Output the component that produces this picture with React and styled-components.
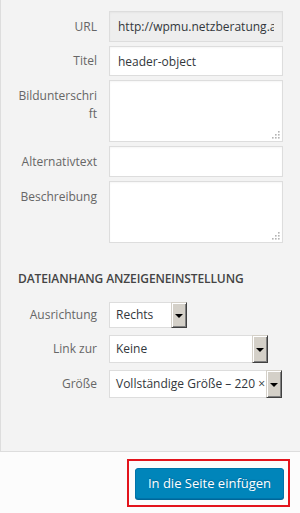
import React from 'react'
import styled, { createGlobalStyle } from 'styled-components'

const GlobalStyle = createGlobalStyle`
  html, body {
    margin: 0;
    padding: 0;
    background: #fcfcfc;
    font-family: "Open Sans", "Liberation Sans", sans-serif;
    font-size: 12px;
  }
  * { box-sizing: border-box; }
`

const Page = styled.div`
  width: 300px;
  height: 513px;
  display: flex;
  flex-direction: column;
  background: #fcfcfc;
  overflow: hidden;
`

const Panel = styled.div`
  height: 452px;
  flex: none;
  background: #f3f3f3;
  border-left: 1px solid #dddddd;
  border-bottom: 1px solid #dddddd;
  padding: 11px 0 0 16px;
`

const FieldGrid = styled.div`
  display: grid;
  grid-template-columns: 80px 174px;
  column-gap: 12px;
  row-gap: 4px;
`

const Label = styled.label`
  color: #666666;
  text-align: right;
  line-height: 18px;
  padding-top: ${p => (p.$top ? '7px' : '0')};
  align-self: ${p => (p.$top ? 'start' : 'center')};
  white-space: nowrap;
`

const TextInput = styled.input`
  width: 100%;
  height: ${p => (p.$tall ? 31 : 30)}px;
  border: 1px solid #dddddd;
  background: ${p => (p.disabled ? '#eeeeee' : '#ffffff')};
  color: #32373c;
  font: inherit;
  padding: 0 8px;
  margin: 0;
  outline: none;
  box-shadow: inset 0 1px 2px rgba(0, 0, 0, 0.04);
`

const AreaWrap = styled.div`
  position: relative;
  height: 62px;
`

const TextArea = styled.textarea`
  width: 100%;
  height: 100%;
  border: 1px solid #dddddd;
  background: #ffffff;
  font: inherit;
  margin: 0;
  padding: 6px 8px;
  resize: none;
  outline: none;
  display: block;
  box-shadow: inset 0 1px 2px rgba(0, 0, 0, 0.04);
`

const Grip = styled.svg`
  position: absolute;
  right: 2px;
  bottom: 2px;
  width: 10px;
  height: 10px;
`

const Heading = styled.h2`
  margin: 27px 0 0 1px;
  font-size: 12px;
  font-weight: 600;
  color: #444444;
  text-transform: uppercase;
  line-height: 18px;
  letter-spacing: -0.1px;
`

const SelectGrid = styled.div`
  display: grid;
  grid-template-columns: 80px auto;
  justify-content: start;
  column-gap: 12px;
  row-gap: 7px;
  margin-top: 14px;
`

const SelectBox = styled.div`
  display: flex;
  width: ${p => p.$width}px;
  height: ${p => p.$height || 27}px;
  border: 1px solid #dddddd;
  background: #ffffff;
  color: #32373c;
`

const SelectValue = styled.span`
  flex: 1;
  min-width: 0;
  white-space: nowrap;
  overflow: hidden;
  padding-left: 6px;
  line-height: ${p => (p.$height || 27) - 2}px;
`

const Arrow = styled.span`
  flex: none;
  width: 16px;
  margin: -1px -1px -1px 0;
  background: #d4d0c8;
  border-top: 1px solid #d4d0c8;
  border-left: 1px solid #d4d0c8;
  border-right: 1px solid #404040;
  border-bottom: 1px solid #404040;
  box-shadow: inset 1px 1px #ffffff, inset -1px -1px #808080;
  display: flex;
  align-items: center;
  justify-content: center;
  &::after {
    content: '';
    border-left: 4px solid transparent;
    border-right: 4px solid transparent;
    border-top: 4px solid #000000;
    margin-top: 1px;
  }
`

const Footer = styled.div`
  flex: 1;
  display: flex;
  justify-content: flex-end;
  align-items: flex-start;
  padding: 7px 10px 0 0;
`

const Highlight = styled.div`
  border: 2px solid #e3141c;
  padding: 7px 4px 6px 6px;
`

const PrimaryButton = styled.button`
  width: 149px;
  height: 31px;
  background: #0085ba;
  border: 1px solid #0073aa;
  border-radius: 3px;
  box-shadow: 0 1px 0 #006799;
  color: #ffffff;
  font: inherit;
  font-size: 13px;
  padding: 0 10px 1px;
  cursor: pointer;
  text-shadow: 0 -1px 1px #006799;
`

function Area() {
  return (
    <AreaWrap>
      <TextArea />
      <Grip viewBox="0 0 10 10">
        {[[8, 2], [5, 5], [8, 5], [2, 8], [5, 8], [8, 8]].map(([x, y]) => (
          <rect key={`${x}-${y}`} x={x - 1} y={y - 1} width="1.6" height="1.6" fill="#b4b4b4" />
        ))}
      </Grip>
    </AreaWrap>
  )
}

function Select({ value, width, height }) {
  return (
    <SelectBox $width={width} $height={height}>
      <SelectValue $height={height}>{value}</SelectValue>
      <Arrow />
    </SelectBox>
  )
}

export default function App() {
  return (
    <Page>
      <GlobalStyle />
      <Panel>
        <FieldGrid>
          <Label>URL</Label>
          <TextInput $tall disabled value="http://wpmu.netzberatung.at/files/header-object.png" readOnly />
          <Label>Titel</Label>
          <TextInput value="header-object" readOnly />
          <Label $top>Bildunterschri<br />ft</Label>
          <Area />
          <Label>Alternativtext</Label>
          <TextInput $tall value="" readOnly />
          <Label $top>Beschreibung</Label>
          <Area />
        </FieldGrid>

        <Heading>Dateianhang Anzeigeneinstellung</Heading>

        <SelectGrid>
          <Label>Ausrichtung</Label>
          <Select value="Rechts" width={78} height={26} />
          <Label>Link zur</Label>
          <Select value="Keine" width={159} height={28} />
          <Label>Größe</Label>
          <Select value="Vollständige Größe – 220 ×" width={173} height={28} />
        </SelectGrid>
      </Panel>

      <Footer>
        <Highlight>
          <PrimaryButton>In die Seite einfügen</PrimaryButton>
        </Highlight>
      </Footer>
    </Page>
  )
}
